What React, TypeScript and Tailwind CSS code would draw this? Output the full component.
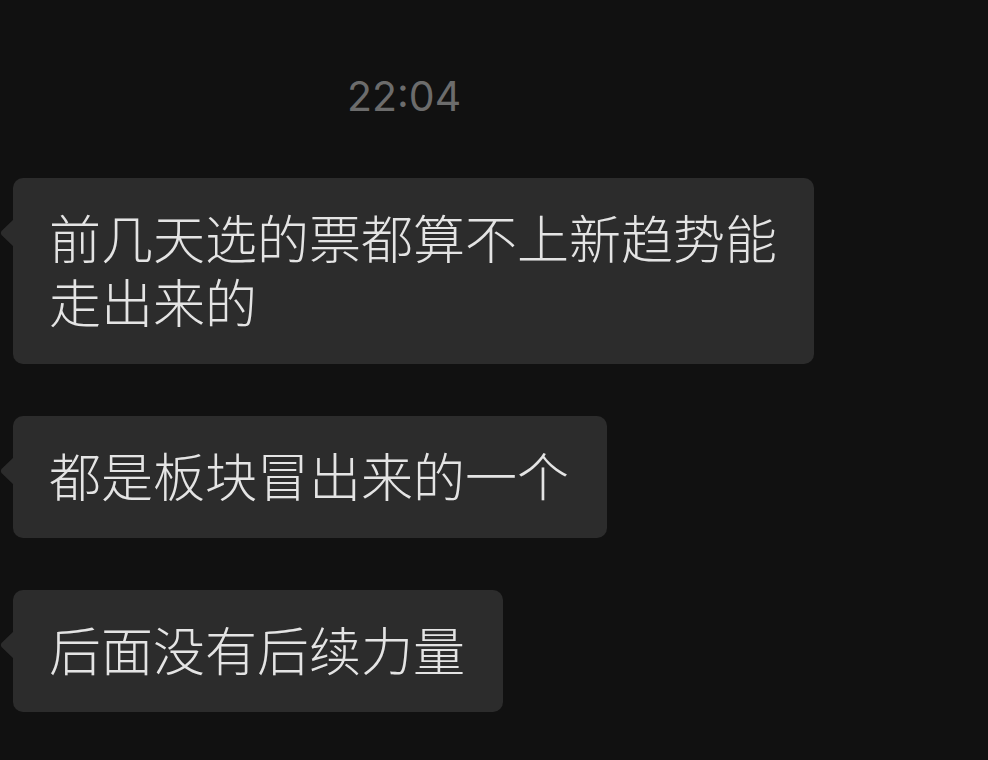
import React from "react";

const Bubble = ({ children, extra }: { children: React.ReactNode; extra: string }) => (
  <div className="relative ml-[13px] w-fit">
    <svg
      className="absolute left-[-13px] top-[41px]"
      width="14"
      height="28"
      viewBox="0 0 14 28"
    >
      <path d="M14 0 L1.5 12 Q0 14 1.5 16 L14 28 Z" fill="#2c2c2c" />
    </svg>
    <div
      className={`rounded-[10px] bg-[#2c2c2c] pl-[36px] pt-[27px] pb-[31px] text-[52px] font-light leading-[64px] text-[#e4e4e4] ${extra}`}
      style={{ fontFamily: '"Noto Sans CJK SC", "Noto Sans", sans-serif' }}
    >
      {children}
    </div>
  </div>
);

export default function App() {
  return (
    <div className="h-[760px] w-[988px] overflow-hidden bg-[#111111] pt-[72px]">
      <div
        className="pl-[347px] text-[41px] leading-[48px] text-[#6c6c6c]"
        style={{ fontFamily: 'Inter, "Noto Sans", sans-serif' }}
      >
        22:04
      </div>
      <div className="mt-[58px] flex flex-col gap-[52px]">
        <Bubble extra="pr-[36px] max-w-[801px]">前几天选的票都算不上新趋势能走出来的</Bubble>
        <Bubble extra="pr-[38px]">都是板块冒出来的一个</Bubble>
        <Bubble extra="pr-[38px]">后面没有后续力量</Bubble>
      </div>
    </div>
  );
}
